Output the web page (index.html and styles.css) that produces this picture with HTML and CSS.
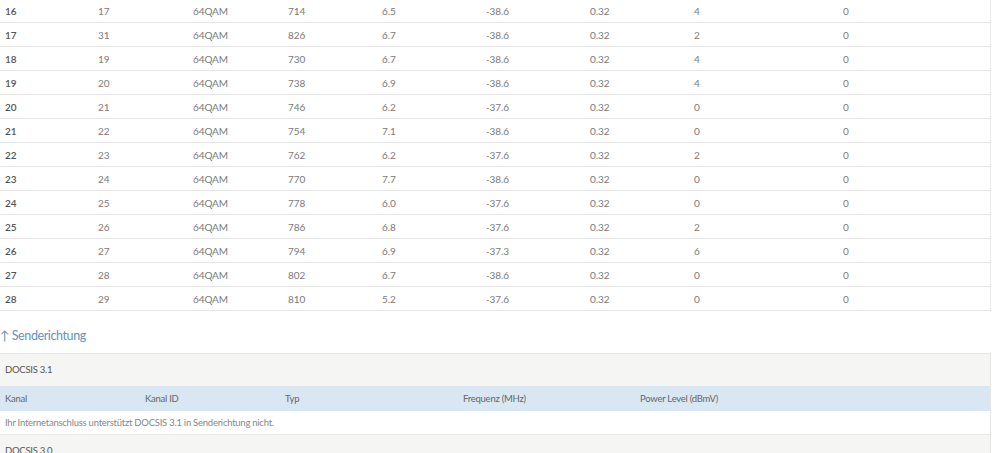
FILE: index.html
```html
<!DOCTYPE html>
<html lang="de">
<head>
  <meta charset="UTF-8">
  <title>Kanalübersicht</title>
  <link rel="stylesheet" href="styles.css">
</head>
<body>
<div class="page">
  <table class="channels">
    <colgroup>
      <col style="width:93px"><col style="width:95px"><col style="width:95px"><col style="width:94px">
      <col style="width:104px"><col style="width:104px"><col style="width:104px"><col style="width:149px"><col>
    </colgroup>
    <tbody>
      <tr><th>16</th><td>17</td><td>64QAM</td><td>714</td><td>6.5</td><td>-38.6</td><td>0.32</td><td>4</td><td>0</td></tr>
      <tr><th>17</th><td>31</td><td>64QAM</td><td>826</td><td>6.7</td><td>-38.6</td><td>0.32</td><td>2</td><td>0</td></tr>
      <tr><th>18</th><td>19</td><td>64QAM</td><td>730</td><td>6.7</td><td>-38.6</td><td>0.32</td><td>4</td><td>0</td></tr>
      <tr><th>19</th><td>20</td><td>64QAM</td><td>738</td><td>6.9</td><td>-38.6</td><td>0.32</td><td>4</td><td>0</td></tr>
      <tr><th>20</th><td>21</td><td>64QAM</td><td>746</td><td>6.2</td><td>-37.6</td><td>0.32</td><td>0</td><td>0</td></tr>
      <tr><th>21</th><td>22</td><td>64QAM</td><td>754</td><td>7.1</td><td>-38.6</td><td>0.32</td><td>0</td><td>0</td></tr>
      <tr><th>22</th><td>23</td><td>64QAM</td><td>762</td><td>6.2</td><td>-37.6</td><td>0.32</td><td>2</td><td>0</td></tr>
      <tr><th>23</th><td>24</td><td>64QAM</td><td>770</td><td>7.7</td><td>-38.6</td><td>0.32</td><td>0</td><td>0</td></tr>
      <tr><th>24</th><td>25</td><td>64QAM</td><td>778</td><td>6.0</td><td>-37.6</td><td>0.32</td><td>0</td><td>0</td></tr>
      <tr><th>25</th><td>26</td><td>64QAM</td><td>786</td><td>6.8</td><td>-37.6</td><td>0.32</td><td>2</td><td>0</td></tr>
      <tr><th>26</th><td>27</td><td>64QAM</td><td>794</td><td>6.9</td><td>-37.3</td><td>0.32</td><td>6</td><td>0</td></tr>
      <tr><th>27</th><td>28</td><td>64QAM</td><td>802</td><td>6.7</td><td>-38.6</td><td>0.32</td><td>0</td><td>0</td></tr>
      <tr><th>28</th><td>29</td><td>64QAM</td><td>810</td><td>5.2</td><td>-37.6</td><td>0.32</td><td>0</td><td>0</td></tr>
    </tbody>
  </table>

  <h2 class="direction">↑ Senderichtung</h2>

  <div class="box">
    <div class="box-title">DOCSIS 3.1</div>
    <table class="upstream">
      <colgroup>
        <col style="width:140px"><col style="width:140px"><col style="width:178px"><col style="width:177px"><col>
      </colgroup>
      <thead>
        <tr><th>Kanal</th><th>Kanal ID</th><th>Typ</th><th>Frequenz (MHz)</th><th>Power Level (dBmV)</th></tr>
      </thead>
      <tbody>
        <tr><td colspan="5">Ihr Internetanschluss unterstützt DOCSIS 3.1 in Senderichtung nicht.</td></tr>
      </tbody>
    </table>
    <div class="box-title">DOCSIS 3.0</div>
  </div>
</div>
</body>
</html>
```

FILE: styles.css
```css
body {
    margin: 0;
    background: #fff;
    font-family: "Source Sans Pro", Lato, "Liberation Sans", sans-serif;
    font-size: 9.5px;
    letter-spacing: -0.25px;
    color: #7a7a7a;
}

.page {
    width: 991px;
    margin-top: -1px;
}

table {
    width: 100%;
    border-collapse: collapse;
    table-layout: fixed;
}

.channels td,
.channels th {
    height: 23px;
    padding: 0 5px;
    text-align: left;
    font-size: 10px;
    letter-spacing: -0.1px;
    border-bottom: 1px solid #e6e6e6;
}

.channels tr td:last-child {
    border-right: 1px solid #ececec;
}

.channels th {
    font-weight: 600;
    color: #555;
}

.direction {
    margin: 0;
    padding: 17px 0 0;
    height: 25px;
    font-size: 12.5px;
    letter-spacing: -0.4px;
    font-weight: 400;
    color: #6592b8;
}

.box {
    border: 1px solid #e6e6e6;
    border-left: 0;
    border-bottom: 0;
}

.box-title {
    height: 32px;
    line-height: 32px;
    padding: 0 5px;
    background: #f5f5f4;
    color: #555;
}

.upstream th {
    height: 25px;
    padding: 0 5px;
    text-align: left;
    font-weight: 400;
    color: #666;
    background: #d9e7f3;
}

.upstream td {
    height: 23px;
    padding: 0 5px;
    border-bottom: 1px solid #e8e8e8;
    color: #888;
}
```
